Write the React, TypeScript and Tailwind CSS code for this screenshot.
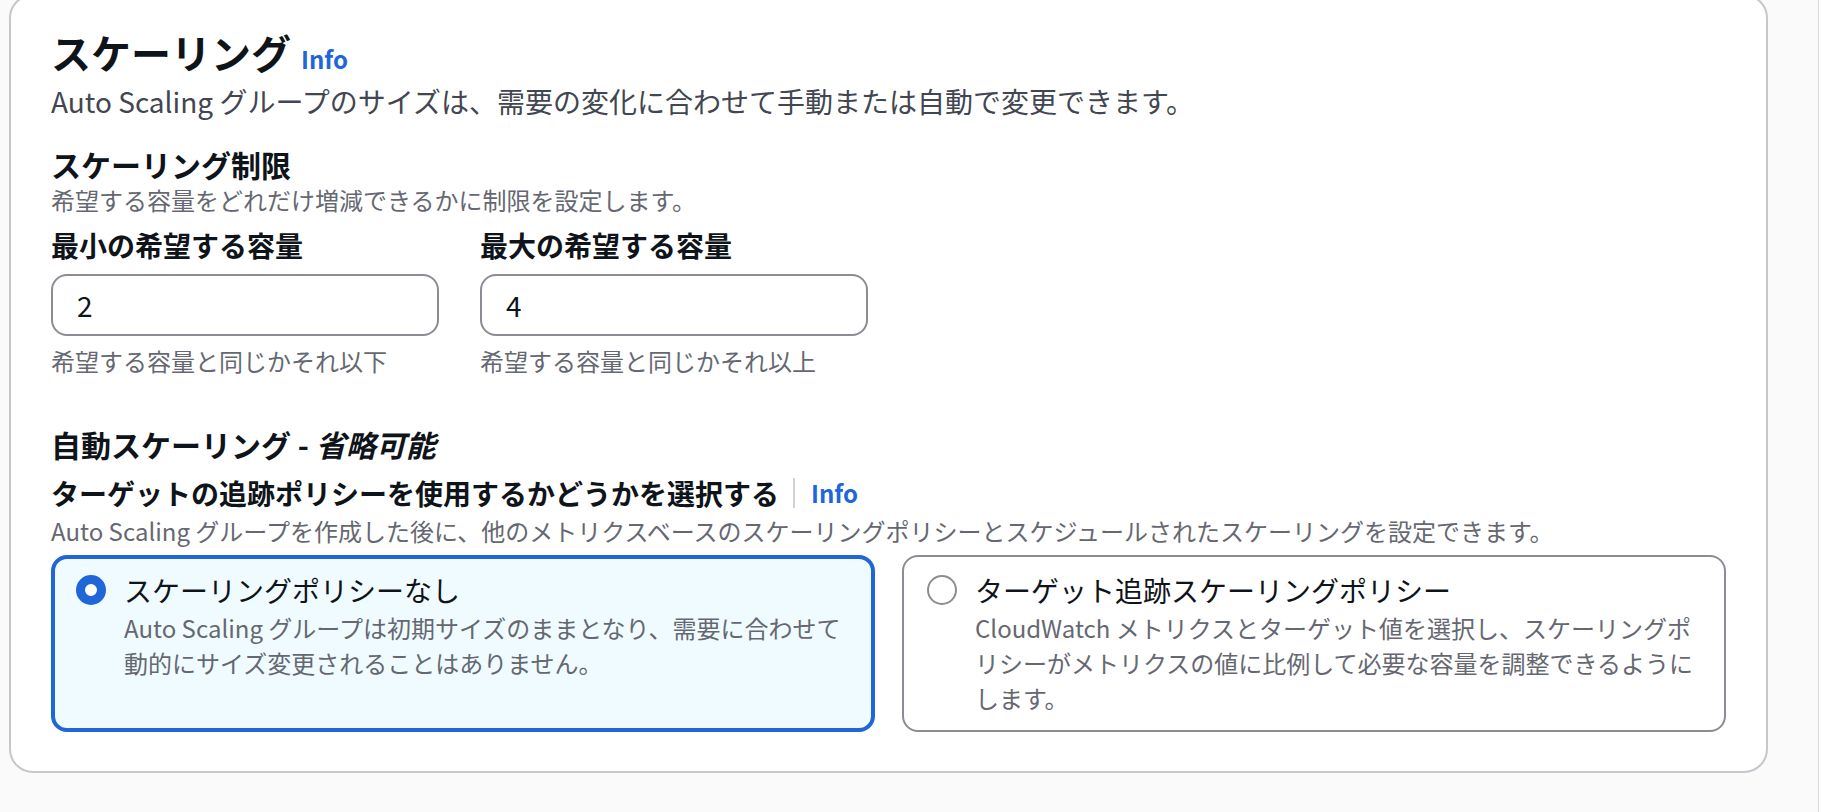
import { useState } from 'react'

type Policy = 'none' | 'target'

const LINK = 'text-[#1f66d9]'

function InfoLink() {
  return (
    <a href="#" className={`text-[24px] font-bold leading-[32px] ${LINK}`}>
      Info
    </a>
  )
}

function CapacityField({ label, value, hint }: { label: string; value: string; hint: string }) {
  return (
    <div className="w-[388px]">
      <label className="block text-[28px] font-bold leading-[40px] text-[#0f141a]">{label}</label>
      <input
        className="mt-[9px] h-[62px] w-full rounded-[16px] border-2 border-[#8c8c94] bg-white px-[24px] text-[28px] text-[#0f141a] outline-none"
        defaultValue={value}
      />
      <p className="mt-[9px] text-[24px] leading-[32px] text-[#656871]">{hint}</p>
    </div>
  )
}

function PolicyTile({
  checked,
  onSelect,
  title,
  lines,
}: {
  checked: boolean
  onSelect: () => void
  title: string
  lines: string[]
}) {
  return (
    <div
      role="radio"
      aria-checked={checked}
      onClick={onSelect}
      className={
        checked
          ? 'cursor-pointer rounded-[16px] border-4 border-[#1f66d9] bg-[#f0fbff] pb-[13px] pl-[21px] pr-[22px] pt-[11px]'
          : 'cursor-pointer rounded-[16px] border-2 border-[#8c8c94] bg-white pb-[15px] pl-[23px] pr-[24px] pt-[13px]'
      }
    >
      <div className="flex items-start gap-[18px]">
        <div className="flex h-[40px] shrink-0 items-center">
          <span
            className={
              checked
                ? 'h-[30px] w-[30px] rounded-full border-[9px] border-[#1f66d9] bg-white'
                : 'h-[30px] w-[30px] rounded-full border-2 border-[#8c8c94] bg-white'
            }
          />
        </div>
        <div className="min-w-0">
          <div className="text-[28px] leading-[40px] text-[#0f141a]">{title}</div>
          <p className="text-[24px] leading-[35px] text-[#656871]">
            {lines.map((l, i) => (
              <span key={i} className="block whitespace-nowrap">
                {l}
              </span>
            ))}
          </p>
        </div>
      </div>
    </div>
  )
}

export default function App() {
  const [policy, setPolicy] = useState<Policy>('none')

  return (
    <div className="flex h-[812px] w-full overflow-hidden bg-[#fafafa] font-['Noto_Sans_CJK_JP',sans-serif]">
      <main className="min-w-0 flex-1 pl-[9px] pr-[50px]">
        <section className="-mt-[6px] rounded-[24px] border-2 border-[#c6c6cd] bg-white px-[40px] pb-[39px] pt-[32px]">
          {/* Header */}
          <div className="flex h-[48px] items-baseline gap-[10px]">
            <h2 className="text-[40px] font-bold leading-[48px] text-[#0f141a]">スケーリング</h2>
            <InfoLink />
          </div>
          <p className="mt-[5px] text-[28px] leading-[40px] text-[#424650]">
            Auto Scaling グループのサイズは、需要の変化に合わせて手動または自動で変更できます。
          </p>

          {/* Scaling limits */}
          <h3 className="mt-[23px] text-[30px] font-bold leading-[40px] text-[#0f141a]">スケーリング制限</h3>
          <p className="text-[24px] leading-[32px] text-[#656871]">
            希望する容量をどれだけ増減できるかに制限を設定します。
          </p>
          <div className="mt-[9px] flex gap-[41px]">
            <CapacityField label="最小の希望する容量" value="2" hint="希望する容量と同じかそれ以下" />
            <CapacityField label="最大の希望する容量" value="4" hint="希望する容量と同じかそれ以上" />
          </div>

          {/* Automatic scaling */}
          <h3 className="mt-[47px] text-[30px] font-bold leading-[40px] text-[#0f141a]">
            自動スケーリング - <span className="italic">省略可能</span>
          </h3>
          <div className="mt-[9px] flex h-[40px] items-center">
            <span className="text-[28px] font-bold leading-[40px] text-[#0f141a]">
              ターゲットの追跡ポリシーを使用するかどうかを選択する
            </span>
            <span className="ml-[14px] mr-[16px] h-[30px] w-[2px] bg-[#d1d1d6]" />
            <InfoLink />
          </div>
          <p className="mt-[2px] text-[24px] leading-[32px] text-[#656871]">
            Auto Scaling グループを作成した後に、他のメトリクスベースのスケーリングポリシーとスケジュールされたスケーリングを設定できます。
          </p>

          <div className="mt-[8px] grid grid-cols-2 gap-[27px]">
            <PolicyTile
              checked={policy === 'none'}
              onSelect={() => setPolicy('none')}
              title="スケーリングポリシーなし"
              lines={[
                'Auto Scaling グループは初期サイズのままとなり、需要に合わせて',
                '動的にサイズ変更されることはありません。',
              ]}
            />
            <PolicyTile
              checked={policy === 'target'}
              onSelect={() => setPolicy('target')}
              title="ターゲット追跡スケーリングポリシー"
              lines={[
                'CloudWatch メトリクスとターゲット値を選択し、スケーリングポ',
                'リシーがメトリクスの値に比例して必要な容量を調整できるように',
                'します。',
              ]}
            />
          </div>
        </section>
      </main>
      {/* scrollbar track */}
      <div className="w-[4px] shrink-0 border-l border-[#dcdcdc] bg-white" />
    </div>
  )
}
